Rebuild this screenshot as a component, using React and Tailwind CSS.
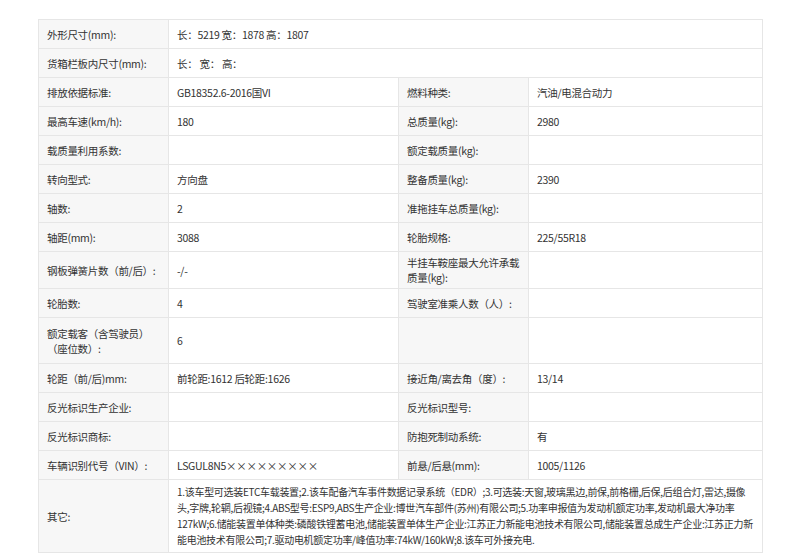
import React from 'react';

// 参数表：[标签, 值, 标签2, 值2]；只有两列的行占满宽
const rows = [
	['外形尺寸(mm):', '长：5219 宽：1878 高：1807'],
	['货箱栏板内尺寸(mm):', '长：  宽：  高：'],
	['排放依据标准:', 'GB18352.6-2016国VI', '燃料种类:', '汽油/电混合动力'],
	['最高车速(km/h):', '180', '总质量(kg):', '2980'],
	['载质量利用系数:', '', '额定载质量(kg):', ''],
	['转向型式:', '方向盘', '整备质量(kg):', '2390'],
	['轴数:', '2', '准拖挂车总质量(kg):', ''],
	['轴距(mm):', '3088', '轮胎规格:', '225/55R18'],
	['钢板弹簧片数（前/后）:', '-/-', '半挂车鞍座最大允许承载质量(kg):', '', 'h-[37px]'],
	['轮胎数:', '4', '驾驶室准乘人数（人）:', ''],
	['额定载客（含驾驶员）（座位数）:', '6', '', '', 'h-[46px]'],
	['轮距（前/后)mm:', '前轮距:1612 后轮距:1626', '接近角/离去角（度）:', '13/14'],
	['反光标识生产企业:', '', '反光标识型号:', ''],
	['反光标识商标:', '', '防抱死制动系统:', '有'],
	['车辆识别代号（VIN）:', 'LSGUL8N5×××××××××', '前悬/后悬(mm):', '1005/1126'],
];

const other = '1.该车型可选装ETC车载装置;2.该车配备汽车事件数据记录系统（EDR）;3.可选装:天窗,玻璃黑边,前保,前格栅,后保,后组合灯,雷达,摄像头,字牌,轮辋,后视镜;4.ABS型号:ESP9,ABS生产企业:博世汽车部件(苏州)有限公司;5.功率申报值为发动机额定功率,发动机最大净功率127kW;6.储能装置单体种类:磷酸铁锂蓄电池,储能装置单体生产企业:江苏正力新能电池技术有限公司,储能装置总成生产企业:江苏正力新能电池技术有限公司;7.驱动电机额定功率/峰值功率:74kW/160kW;8.该车可外接充电.';

const lab = 'border border-[#e6e6e6] bg-[#f7f7f7] px-2 py-0 align-middle leading-[15px]';
const val = 'border border-[#e6e6e6] bg-white px-2 py-0 align-middle leading-[15px]';

export default function App() {
	return (
		<div className="w-[800px] h-[553px] overflow-hidden bg-white pt-[19px] pl-[38px] text-[10.5px] tracking-[-0.3px] text-[#333]" style={{ fontFamily: '"Noto Sans CJK SC", "Liberation Sans", sans-serif' }}>
			<table className="w-[724px] border-collapse table-fixed">
				<colgroup>
					<col className="w-[130px]" />
					<col className="w-[230px]" />
					<col className="w-[130px]" />
					<col className="w-[234px]" />
				</colgroup>
				<tbody>
					{rows.map((r, i) => (
						<tr key={i} className={r[4] || 'h-[29px]'}>
							<td className={lab}>{r[0]}</td>
							{r.length === 2 ? (
								<td colSpan={3} className={val}>{r[1]}</td>
							) : (
								<>
									<td className={val}>{r[1]}</td>
									<td className={lab}>{r[2]}</td>
									<td className={val}>{r[3]}</td>
								</>
							)}
						</tr>
					))}
					<tr className="h-[71px]">
						<td className={lab}>其它:</td>
						<td colSpan={3} className="border border-[#e6e6e6] bg-white px-2 py-1 align-middle text-[10px] leading-[16px]">{other}</td>
					</tr>
					<tr className="h-[29px]">
						<td className={lab}></td>
						<td colSpan={3} className={val}></td>
					</tr>
				</tbody>
			</table>
		</div>
	);
}
